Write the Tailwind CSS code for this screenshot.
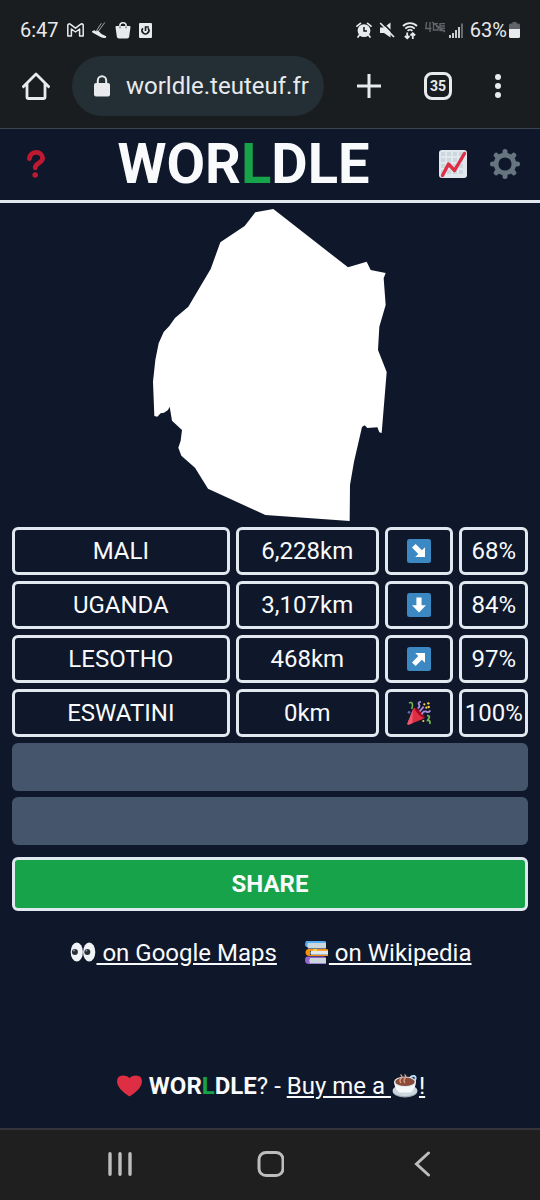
<!DOCTYPE html>
<html lang="en">
<head>
    <meta charset="UTF-8">
    <meta name="viewport" content="width=device-width, initial-scale=1.0">
    <title>Worldle</title>
    <script src="https://cdn.jsdelivr.net/npm/@tailwindcss/browser@4"></script>
</head>
<body class="bg-[#0f172a] text-slate-50 min-h-screen flex flex-col font-['Roboto',sans-serif] text-2xl">

<!-- Phone status bar and browser bar -->
<div class="bg-[#1a1d1f] text-[#e8eaed] border-b border-[#3c4450]">
    <div class="h-14 pt-1 px-5 flex items-center justify-between text-xl">
        <div class="flex items-center gap-2">
            <span>6:47</span>
            <svg class="w-[17px] h-[14px]" viewBox="0 0 17 14" fill="none" stroke="currentColor" stroke-width="1.5" stroke-linejoin="round"><path d="M.8 1.8Q1.7.3 3.2 1.2L8.5 5.2 13.8 1.2Q15.3.3 16.2 1.8V13H12.6V6L8.5 9 4.4 6V13H.8Z"/></svg>
            <svg class="w-[15px] h-[17px]" viewBox="0 0 15 17"><path d="M0 9.2 2.2 8.2 4.2 9.2 6 8.4Q9 12.6 14.2 14.2 14.8 15.6 13 16 10 16.4 7.6 14.6L.4 10.6Z" fill="currentColor"/><path d="M4 9.5 9.3 1.2M6.5 9 12.8.5" stroke="#a4a6a8" stroke-width="1" fill="none"/></svg>
            <svg class="w-4 h-[17px]" viewBox="0 0 16 17"><path d="M.5 5Q.5 4 1.5 4H14.5Q15.5 4 15.5 5L14.2 14.6Q14 16.5 12 16.5H4Q2 16.5 1.8 14.6Z" fill="currentColor"/><path d="M4.8 5V4a3.2 3.2 0 0 1 6.4 0V5" fill="none" stroke="currentColor" stroke-width="1.5"/><path d="M5 4.5V6.3M11 4.5V6.3" stroke="#1a1d1f" stroke-width=".8"/></svg>
            <svg class="w-[13px] h-[15px]" viewBox="0 0 13 15"><rect width="13" height="15" rx="1" fill="currentColor"/><path d="M3.9 5.2A3.4 3.4 0 1 0 9 5.2M6.5 8V4H9.8" fill="none" stroke="#1a1d1f" stroke-width="1.6"/></svg>
        </div>
        <div class="flex items-center gap-[7px]">
            <svg class="w-4 h-4" viewBox="0 0 16 16"><circle cx="8" cy="8.6" r="6.4" fill="currentColor"/><path d="M1 4.2 4.4 1.4M15 4.2 11.6 1.4M3.4 13 2 15M12.6 13 14 15" stroke="currentColor" stroke-width="1.7" stroke-linecap="round"/><path d="M8 5V9H11" stroke="#1a1d1f" stroke-width="1.5" fill="none"/></svg>
            <svg class="w-4 h-4" viewBox="0 0 16 16"><path d="M1 5.5H5L11.5.5V15.5L5 11H1Z" fill="currentColor"/><path d="M2.8 0 16 13.2" stroke="#1a1d1f" stroke-width="1.6"/><path d="M1.2 1 15 15" stroke="currentColor" stroke-width="1.7"/></svg>
            <svg class="w-4 h-[19px]" viewBox="0 0 16 19" fill="none" stroke="currentColor" stroke-width="1.8"><path d="M1 5A10 10 0 0 1 15 5M3.3 7.6A6.5 6.5 0 0 1 12.7 7.6M5.6 9.8A3.4 3.4 0 0 1 10.4 9.8"/><path d="M5.2 11.5V17M2.9 15 5.2 17.3 7.5 15M10.8 18V12.5M8.5 14.5 10.8 12.2 13.1 14.5"/></svg>
            <svg class="w-[21px] h-5" viewBox="0 0 21 20" fill="none" stroke="#606468" stroke-width="1.4"><path d="M5 12V2M1.6 2 .8 8.5H6.5M13 3.6H8.5V10H13V6.5H11M20 3.6H15V10.5H20M15 6H20M15 8.3H20M7 2 20 12"/></svg>
            <svg class="w-[14px] h-[15px] -ml-1" viewBox="0 0 14 15"><path d="M1 12V15M4 10V15M7 7V15M10 4V15" stroke="currentColor" stroke-width="1.7"/><path d="M13 .5V15" stroke="#75797c" stroke-width="1.7"/></svg>
            <div class="flex items-center gap-[2px]">
                <span>63%</span>
                <svg class="w-[11px] h-4" viewBox="0 0 11 16"><path d="M3.5 0H7.5V1.5H9.5Q11 1.5 11 3V7H0V3Q0 1.5 1.5 1.5H3.5Z" fill="#606468"/><path d="M0 7H11V14.5Q11 16 9.5 16H1.5Q0 16 0 14.5Z" fill="currentColor"/></svg>
            </div>
        </div>
    </div>
    <div class="h-[72px] pb-3 flex items-center">
        <button type="button" aria-label="Home" class="w-[72px] shrink-0 flex justify-center">
            <svg class="w-7 h-7" viewBox="0 0 28 28" fill="none" stroke="currentColor" stroke-width="2.8" stroke-linejoin="round"><path d="M1.5 14.5 14 2 26.5 14.5M5 12V25Q5 26.5 6.5 26.5H21.5Q23 26.5 23 25V12" stroke-linecap="square"/></svg>
        </button>
        <div class="flex-1 min-w-0 h-[60px] rounded-full bg-[#232f34] flex items-center gap-4 pl-[22px] pr-3">
            <svg class="w-4 h-[22px] shrink-0" viewBox="0 0 16 22"><rect y="8" width="16" height="13.5" rx="2" fill="currentColor"/><path d="M3.8 9V5.4a4.2 4.2 0 0 1 8.4 0V9" fill="none" stroke="currentColor" stroke-width="2"/></svg>
            <input type="text" aria-label="Address" value="worldle.teuteuf.fr" class="min-w-0 flex-1 bg-transparent outline-none">
        </div>
        <div class="w-[216px] shrink-0 pl-[33px] flex items-center">
            <button type="button" aria-label="New tab"><svg class="w-6 h-6" viewBox="0 0 24 24" stroke="currentColor" stroke-width="3"><path d="M12 0V24M0 12H24"/></svg></button>
            <button type="button" aria-label="Switch tabs" class="ml-[43px] w-7 h-7 border-3 border-current rounded-lg text-sm leading-none font-bold flex items-center justify-center">35</button>
            <button type="button" aria-label="Menu" class="ml-[43px]"><svg class="w-[6px] h-6" viewBox="0 0 6 24" fill="currentColor"><circle cx="3" cy="3" r="3"/><circle cx="3" cy="12" r="3"/><circle cx="3" cy="21" r="3"/></svg></button>
        </div>
    </div>
</div>

<!-- Game header -->
<header class="h-[74px] border-b-3 border-slate-200 flex items-center pb-[2px]">
    <button type="button" aria-label="How to play" class="ml-[27px] mr-[6px]">
        <svg class="w-[18px] h-7" viewBox="0 0 18 28"><path d="M2.4 8.6C3 3.9 6.6 2.4 9.3 2.4 13 2.4 15.6 5 15.6 8.3 15.6 13.2 8.2 12.8 8.2 17.8" fill="none" stroke="#be1931" stroke-width="4.8" stroke-linecap="round"/><circle cx="8.2" cy="25" r="2.8" fill="#be1931"/></svg>
    </button>
    <h1 class="flex-1 text-center text-[56px] leading-none font-bold">WOR<span class="text-[#16a34a]">L</span>DLE</h1>
    <div class="w-[104px] pr-5 flex justify-end items-center gap-[23px]">
        <button type="button" aria-label="Stats">
            <svg class="w-7 h-7" viewBox="0 0 28 28"><rect width="28" height="28" rx="3" fill="#e1e8ed"/><path d="M2 2h4v4H2zM8 2h4v4H8zM14 2h4v4h-4zM20 2h4v4h-4zM2 8h4v4H2zM8 8h4v4H8zM14 8h4v4h-4zM20 8h4v4h-4zM2 14h4v4H2zM8 14h4v4H8zM14 14h4v4h-4zM20 14h4v4h-4zM2 20h4v4H2zM8 20h4v4H8zM14 20h4v4h-4zM20 20h4v4h-4z" fill="#ccd6dd"/><path d="M3.5 25.5 9.5 14 15.5 20.5 25.5 3.5" fill="none" stroke="#dd2e44" stroke-width="3.4" stroke-linecap="round" stroke-linejoin="round"/></svg>
        </button>
        <button type="button" aria-label="Settings">
            <svg class="w-[30px] h-[30px]" viewBox="0 0 30 30"><circle cx="15" cy="15" r="8.9" fill="none" stroke="#66757f" stroke-width="4.6"/><g stroke="#66757f" stroke-width="5" stroke-linecap="round"><path d="M15 2.5V5M15 25V27.5M2.5 15H5M25 15H27.5M6.2 6.2 7.9 7.9M22.1 22.1 23.8 23.8M6.2 23.8 7.9 22.1M22.1 7.9 23.8 6.2"/></g></svg>
        </button>
    </div>
</header>

<main class="px-3 flex-1 flex flex-col">
    <!-- Country outline -->
    <svg class="w-[236px] h-[314px] mx-auto my-[5px]" viewBox="36 24 708 942" role="img" aria-label="Country to guess">
        <path fill="#fff" d="M346 37 400 27 624 202 680 185 692 210 737 219 731 235 737 315 718 380 714 450 740 516 725 699 718 697 712 682 682 684 674 676 666 681 642 785 630 855 629 963 376 945 204 866 165 803 124 767 115 743 122 722 126 690 96 662 89 620 84 630 72 638 62 640 52 650 43 648 39 545 46 480 56 430 71 396 88 378 105 354 145 320 212 207 241 127 314 78Z"/>
    </svg>

    <!-- Guesses -->
    <table class="block text-center" aria-label="Guesses">
        <tbody class="grid gap-[6px]">
        <tr class="grid grid-cols-7 gap-[6px] h-12">
            <td class="col-span-3 border-3 border-slate-200 rounded-md flex items-center justify-center">MALI</td>
            <td class="col-span-2 border-3 border-slate-200 rounded-md flex items-center justify-center">6,228km</td>
            <td class="border-3 border-slate-200 rounded-md flex items-center justify-center">
                <svg class="w-6 h-6" viewBox="0 0 24 24" role="img" aria-label="South-east"><rect width="24" height="24" rx="2.5" fill="#3b88c3"/><path d="M18 18H8.2L11.3 14.9 5 8.6 8.6 5 14.9 11.3 18 8.2Z" fill="#fff"/></svg>
            </td>
            <td class="border-3 border-slate-200 rounded-md flex items-center justify-center">68%</td>
        </tr>
        <tr class="grid grid-cols-7 gap-[6px] h-12">
            <td class="col-span-3 border-3 border-slate-200 rounded-md flex items-center justify-center">UGANDA</td>
            <td class="col-span-2 border-3 border-slate-200 rounded-md flex items-center justify-center">3,107km</td>
            <td class="border-3 border-slate-200 rounded-md flex items-center justify-center">
                <svg class="w-6 h-6" viewBox="0 0 24 24" role="img" aria-label="South"><rect width="24" height="24" rx="2.5" fill="#3b88c3"/><path d="M12 19.5 5 12.2H9.4V4.5H14.6V12.2H19Z" fill="#fff"/></svg>
            </td>
            <td class="border-3 border-slate-200 rounded-md flex items-center justify-center">84%</td>
        </tr>
        <tr class="grid grid-cols-7 gap-[6px] h-12">
            <td class="col-span-3 border-3 border-slate-200 rounded-md flex items-center justify-center">LESOTHO</td>
            <td class="col-span-2 border-3 border-slate-200 rounded-md flex items-center justify-center">468km</td>
            <td class="border-3 border-slate-200 rounded-md flex items-center justify-center">
                <svg class="w-6 h-6" viewBox="0 0 24 24" role="img" aria-label="North-east"><rect width="24" height="24" rx="2.5" fill="#3b88c3"/><path d="M18 6V15.8L14.9 12.7 8.6 19 5 15.4 11.3 9.1 8.2 6Z" fill="#fff"/></svg>
            </td>
            <td class="border-3 border-slate-200 rounded-md flex items-center justify-center">97%</td>
        </tr>
        <tr class="grid grid-cols-7 gap-[6px] h-12">
            <td class="col-span-3 border-3 border-slate-200 rounded-md flex items-center justify-center">ESWATINI</td>
            <td class="col-span-2 border-3 border-slate-200 rounded-md flex items-center justify-center">0km</td>
            <td class="border-3 border-slate-200 rounded-md flex items-center justify-center">
                <svg class="w-6 h-6" viewBox="0 0 36 36" role="img" aria-label="Correct">
                    <path d="M11.6 10.2 26.5 24.7Q25.8 26.5 23 27.3L2.6 35.6Q.4 36 .5 33.6L9 12.5Q10 10 11.6 10.2Z" fill="#dd2e44"/>
                    <path d="M9 12.5 .5 33.6Q.4 36 2.6 35.6L8 33.4Z" fill="#ea596e"/>
                    <path d="M11.6 10.2Q16 11 21 15.8T26.5 24.7Q24 26.5 17.5 20T11.6 10.2Z" fill="#a0041e"/>
                    <path d="M16 11Q20 9 18 5.5T21 1" fill="none" stroke="#aa8dd8" stroke-width="2.8"/>
                    <path d="M22 20Q25 14 29 16T35 14" fill="none" stroke="#aa8dd8" stroke-width="2.8"/>
                    <path d="M3 3Q7 1 8 4T7 12" fill="none" stroke="#77b255" stroke-width="2.4"/>
                    <path d="M30 22Q35 22 33 25.5T31 29Q36 29 34 34.5" fill="none" stroke="#77b255" stroke-width="2.6"/>
                    <path d="M19 15.5 25 8.5" stroke="#aa8dd8" stroke-width="2.6"/>
                    <circle cx="26" cy="5" r="1.7" fill="#ffcc4d"/><circle cx="32" cy="3.5" r="1.8" fill="#ffcc4d"/><circle cx="32.5" cy="9" r="1.8" fill="#ffcc4d"/><circle cx="29" cy="10" r="1.6" fill="#ffcc4d"/>
                    <circle cx="3" cy="17" r="2" fill="#5c6bc0"/><circle cx="24.5" cy="30" r="1.6" fill="#ffcc4d"/>
                </svg>
            </td>
            <td class="border-3 border-slate-200 rounded-md flex items-center justify-center">100%</td>
        </tr>
        <tr class="grid h-12"><td class="bg-slate-600 rounded-md"></td></tr>
        <tr class="grid h-12"><td class="bg-slate-600 rounded-md"></td></tr>
        </tbody>
    </table>

    <button type="button" class="mt-3 h-[54px] shrink-0 border-3 border-slate-200 rounded-md bg-[#16a34a] font-bold">SHARE</button>

    <div class="mt-6 pl-[2px] flex flex-wrap justify-center gap-x-[27px]">
        <a href="#maps" class="flex items-center leading-9">
            <svg class="w-[26px] h-6" viewBox="0 0 26 24" aria-hidden="true"><ellipse cx="6.8" cy="11" rx="6.1" ry="9.5" fill="#f1f4f7"/><ellipse cx="19.2" cy="11" rx="6.1" ry="9.5" fill="#f1f4f7"/><circle cx="4.9" cy="11" r="3" fill="#292f33"/><circle cx="17.3" cy="11" r="3" fill="#292f33"/><circle cx="4" cy="9.6" r="1" fill="#8899a6"/><circle cx="16.4" cy="9.6" r="1" fill="#8899a6"/></svg>
            <span class="underline whitespace-pre"> on Google Maps</span>
        </a>
        <a href="#wikipedia" class="flex items-center leading-9">
            <svg class="w-[25px] h-6" viewBox="0 0 25 24" aria-hidden="true">
                <path d="M2 0H20Q22 0 22 1V6H3Q1 6 1 3Z" fill="#55acee"/><path d="M4 2H22V7.5H4Q2.6 4.8 4 2Z" fill="#ccd6dd"/>
                <path d="M4 8H23Q24 8 24 9V10H6V14H24V15H5Q1.5 14.5 1.5 11.5T4 8Z" fill="#f4900c"/><path d="M7 9.8H24V13.8H7Q5.8 11.8 7 9.8Z" fill="#e1e8ed"/><path d="M9 8H13V10H9Z" fill="#ffcc4d"/>
                <path d="M3.5 15.5H20Q22 15.5 22 17H6V22H22V23H4Q1 22.5 1 19T3.5 15.5Z" fill="#9266cc"/><path d="M6 17H22V22.3H6Q4.7 19.7 6 17Z" fill="#ccd6dd"/>
            </svg>
            <span class="underline whitespace-pre"> on Wikipedia</span>
        </a>
    </div>
</main>

<footer class="py-6 pl-[2px] flex justify-center items-center leading-9">
    <svg class="w-[25px] h-6 mr-[7px]" viewBox="0 0 25 24" role="img" aria-label="Love"><path d="M12.5 22.5Q0 14.5 0 7.7 0 1.5 6 1.5 10.6 1.5 12.5 4.3 14.4 1.5 19 1.5 25 1.5 25 7.7 25 14.5 12.5 22.5Z" fill="#dd2e44"/></svg>
    <span class="whitespace-pre"><b>WOR<span class="text-[#16a34a]">L</span>DLE</b>? - </span>
    <a href="#coffee" class="flex items-center">
        <span class="underline whitespace-pre">Buy me a </span>
        <svg class="w-7 h-6" viewBox="0 0 28 24" role="img" aria-label="coffee">
            <ellipse cx="14" cy="17.5" rx="12.3" ry="6" fill="#99aab5"/><ellipse cx="14" cy="16.4" rx="12.3" ry="5.8" fill="#ccd6dd"/>
            <path d="M19 4.5Q20 1.5 23.5 2 26 3.5 23 8" fill="none" stroke="#bdddf4" stroke-width="2"/>
            <path d="M3 7.5H25Q24.5 15 19.5 18.5H8.5Q3.5 15 3 7.5Z" fill="#f5f8fa"/><ellipse cx="14" cy="7.8" rx="11" ry="5.3" fill="#e1e8ed"/><ellipse cx="14" cy="7.8" rx="9.7" ry="4.3" fill="#8a4b38"/>
            <path d="M10 9Q8 6.5 10 4.5T9.5.5M14 9Q12 6.5 14 4.5T13.5.5" fill="none" stroke="#d99e82" stroke-width="1.4"/>
        </svg>
        <span class="underline">!</span>
    </a>
</footer>

<!-- Android navigation bar -->
<nav class="h-[72px] pb-[2px] bg-[#1f1f1f] border-t-2 border-[#34343a] text-[#bdbdbd] grid grid-cols-[1fr_60px_1fr] items-center">
    <button type="button" aria-label="Recent apps" class="justify-self-end mr-[108px]"><svg class="w-6 h-6" viewBox="0 0 24 24" stroke="currentColor" stroke-width="3.4" stroke-linecap="round"><path d="M2 1.8V22.2M12 1.8V22.2M22 1.8V22.2"/></svg></button>
    <button type="button" aria-label="Home screen" class="justify-self-center"><svg class="w-7 h-7" viewBox="0 0 28 28" fill="none" stroke="currentColor" stroke-width="3"><rect x="3" y="2.5" width="24" height="23" rx="7"/></svg></button>
    <button type="button" aria-label="Back" class="justify-self-start ml-[114px]"><svg class="w-4 h-[26px]" viewBox="0 0 16 26" fill="none" stroke="currentColor" stroke-width="3"><path d="M14.5 2 2.5 13 14.5 24" stroke-linecap="round"/></svg></button>
</nav>
</body>
</html>
